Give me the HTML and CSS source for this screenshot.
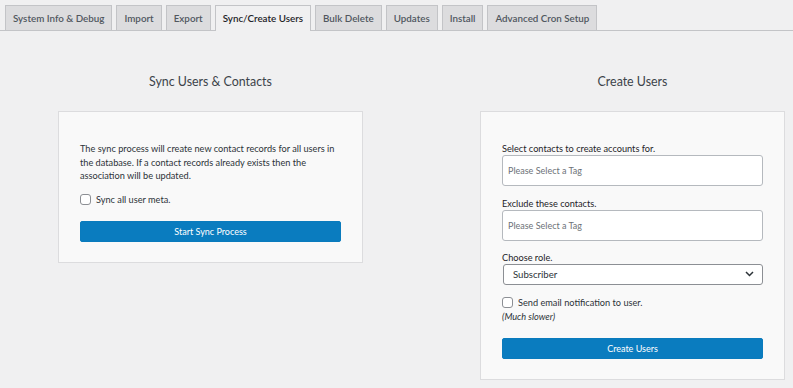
FILE: index.html
```html
<!DOCTYPE html>
<html>
<head>
<meta charset="utf-8" />
<title>Sync/Create Users</title>
<meta name="viewport" content="width=device-width, initial-scale=1">
<link rel="stylesheet" href="styles.css">
</head>

<body>
<nav class="tabs">
  <a href="#" class="tab">System Info &amp; Debug</a>
  <a href="#" class="tab">Import</a>
  <a href="#" class="tab">Export</a>
  <a href="#" class="tab tab-active">Sync/Create Users</a>
  <a href="#" class="tab">Bulk Delete</a>
  <a href="#" class="tab">Updates</a>
  <a href="#" class="tab">Install</a>
  <a href="#" class="tab">Advanced Cron Setup</a>
</nav>

<div class="columns">
  <section class="col">
    <h2 class="col-title">Sync Users &amp; Contacts</h2>
    <div class="card">
      <p class="desc">The sync process will create new contact records for all users in the database. If a contact records already exists then the association will be updated.</p>
      <label class="check-row"><input type="checkbox" class="checkbox"> Sync all user meta.</label>
      <button type="button" class="btn-primary btn-sync">Start Sync Process</button>
    </div>
  </section>

  <section class="col">
    <h2 class="col-title">Create Users</h2>
    <div class="card">
      <label class="field-label">Select contacts to create accounts for.</label>
      <div class="tag-box">Please Select a Tag</div>

      <label class="field-label field-gap">Exclude these contacts.</label>
      <div class="tag-box">Please Select a Tag</div>

      <label class="field-label field-gap-sm">Choose role.</label>
      <div class="select">
        <span>Subscriber</span>
        <svg width="9" height="6" viewBox="0 0 9 6"><path d="M1 1l3.5 3.5 3.5-3.5" fill="none" stroke="#2c3338" stroke-width="1.5"/></svg>
      </div>

      <label class="check-row check-row-email"><input type="checkbox" class="checkbox"> Send email notification to user.</label>
      <div class="note">(Much slower)</div>

      <button type="button" class="btn-primary btn-create">Create Users</button>
    </div>
  </section>
</div>
</body>
</html>
```

FILE: styles.css
```css
body {
  margin: 0;
  background: #f0f0f1;
  color: #3c434a;
  font-family: Lato, "Open Sans", sans-serif;
  font-size: 9.2px;
}

.tabs {
  display: flex;
  gap: 4px;
  padding: 5px 0 0 5px;
  border-bottom: 1px solid #c3c4c7;
  height: 25px;
  box-sizing: content-box;
}

.tab {
  display: block;
  height: 25px;
  line-height: 24px;
  padding: 0 7px;
  box-sizing: border-box;
  border: 1px solid #c3c4c7;
  border-bottom: none;
  background: #dcdcde;
  color: #50575e;
  font-size: 9.8px;
  font-weight: 600;
  text-decoration: none;
}

.tab-active {
  background: #f0f0f1;
  color: #1d2327;
  height: 26px;
  margin-bottom: -1px;
}

.columns {
  display: flex;
  gap: 117px;
  padding-left: 58px;
}

.col {
  width: 305px;
}

.col-title {
  margin: 0;
  height: 80px;
  line-height: 102px;
  text-align: center;
  font-size: 12.4px;
  font-weight: 400;
  color: #3c434a;
}

.card {
  background: #f9f9f9;
  border: 1px solid #dcdcde;
  padding: 30px 21px 20px;
}

.desc {
  margin: 0;
  line-height: 13.5px;
  color: #2c3338;
}

.check-row {
  display: flex;
  align-items: center;
  gap: 5px;
  height: 14px;
  margin-top: 9.5px;
  color: #2c3338;
}

.checkbox {
  appearance: none;
  width: 11px;
  height: 11px;
  margin: 0;
  border: 1px solid #8c8f94;
  border-radius: 3px;
  background: #fff;
}

.btn-primary {
  display: block;
  width: 100%;
  height: 21px;
  border: 1px solid #0a7bbd;
  border-radius: 2px;
  background: #0a7cbf;
  color: #fff;
  font-family: inherit;
  font-size: 9px;
}

.btn-sync {
  margin-top: 15px;
}

.field-label {
  display: block;
  height: 13px;
  line-height: 13px;
  color: #1d2327;
}

.field-gap {
  margin-top: 11px;
}

.field-gap-sm {
  margin-top: 9.5px;
}

.tag-box {
  height: 31px;
  line-height: 29px;
  box-sizing: border-box;
  border: 1px solid #b5b9be;
  border-radius: 3px;
  background: #fff;
  padding-left: 5px;
  color: #6d7278;
  font-size: 9px;
}

.select {
  display: flex;
  align-items: center;
  justify-content: space-between;
  height: 21px;
  box-sizing: border-box;
  margin-left: 1px;
  border: 1px solid #8c8f94;
  border-radius: 3px;
  background: #fff;
  padding: 0 8px 0 9px;
  color: #2c3338;
  font-size: 9.6px;
}

.check-row-email {
  margin-top: 11px;
}

.note {
  line-height: 13px;
  font-style: italic;
  color: #2c3338;
}

.btn-create {
  margin-top: 15.5px;
}
```
